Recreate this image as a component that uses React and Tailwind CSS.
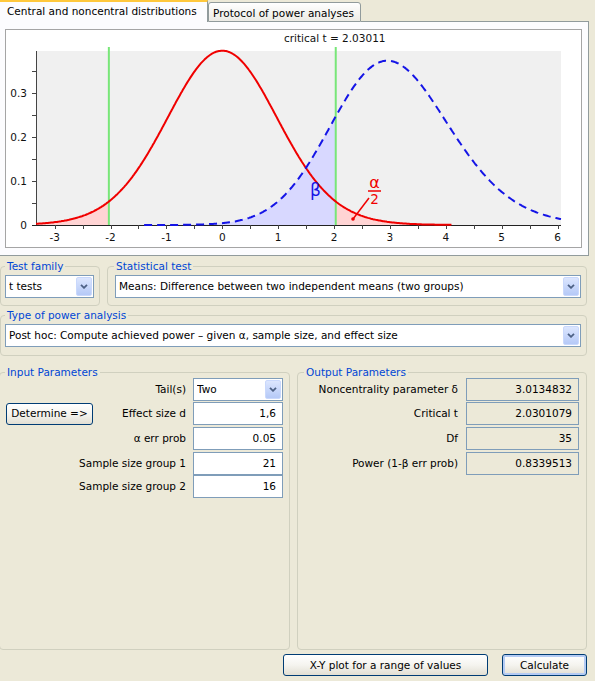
import React from 'react';

// t distribution, df = 35, delta = 3.0134832
const NU = 35;
const DELTA = 3.0134832;
const TC = 2.0301079;

function lgamma(x) {
  const c = [0.99999999999980993, 676.5203681218851, -1259.1392167224028, 771.32342877765313,
    -176.61502916214059, 12.507343278686905, -0.13857109526572012, 9.9843695780195716e-6, 1.5056327351493116e-7];
  x -= 1;
  let a = c[0];
  const t = x + 7.5;
  for (let i = 1; i < 9; i++) a += c[i] / (x + i);
  return 0.5 * Math.log(2 * Math.PI) + (x + 0.5) * Math.log(t) - t + Math.log(a);
}

const X = t => 222.3 + 55.88 * t;
const T = x => (x - 222.3) / 55.88;
const Y = p => 225 - 440 * p;

const LC_T = lgamma((NU + 1) / 2) - lgamma(NU / 2) - 0.5 * Math.log(NU * Math.PI);
const tpdf = t => Math.exp(LC_T - ((NU + 1) / 2) * Math.log(1 + (t * t) / NU));

const LC_CHI = -(NU / 2) * Math.log(2) - lgamma(NU / 2);
function nctpdf(t) {
  let s = 0;
  const n = 500, vmax = 110, dv = vmax / n;
  for (let i = 1; i <= n; i++) {
    const v = (i - 0.5) * dv;
    const r = Math.sqrt(v / NU);
    const z = t * r - DELTA;
    s += Math.exp(LC_CHI + (NU / 2 - 1) * Math.log(v) - v / 2 - (z * z) / 2) * r;
  }
  return (s * dv) / Math.sqrt(2 * Math.PI);
}

function curve(f, x0, x1) {
  const pts = [];
  for (let x = x0; x < x1; x += 1) pts.push([x, Y(f(T(x)))]);
  pts.push([x1, Y(f(T(x1)))]);
  return pts;
}
const line = pts => pts.map((p, i) => `${i ? 'L' : 'M'}${p[0].toFixed(1)} ${p[1].toFixed(1)}`).join('');
const area = pts => `${line(pts)}L${pts[pts.length - 1][0].toFixed(1)} 225L${pts[0][0].toFixed(1)} 225Z`;

const redLine = line(curve(tpdf, 36, X(4.1)));
const redLeft = area(curve(tpdf, 36, X(-TC)));
const redRight = area(curve(tpdf, X(TC), X(4.1)));
const blueFill = area(curve(nctpdf, 36, X(TC)));
const blueLine = line(curve(nctpdf, X(-1.4), 561));

const xTicks = [];
for (let t = -3; t <= 6; t += 0.5) xTicks.push(t);

function Chart() {
  return (
    <svg width="575" height="217" viewBox="6 30 575 217" className="block">
      <rect x="36" y="51" width="525" height="174" fill="#F0F0F0" />
      <path d={redLeft} fill="#FFD4D4" />
      <path d={redRight} fill="#FFD4D4" />
      <path d={blueFill} fill="#D8D8FF" />
      <line x1="36.5" y1="51" x2="36.5" y2="225" stroke="#444" />
      {[0, 1, 2, 3, 4, 5, 6, 7].map(k => (
        <line key={k} x1="32" y1={225.5 - 22 * k} x2="36" y2={225.5 - 22 * k} stroke="#444" />
      ))}
      <line x1="32" y1="225.5" x2="561" y2="225.5" stroke="#222" />
      {xTicks.map(t => (
        <line key={t} x1={Math.round(X(t)) + 0.5} y1="225" x2={Math.round(X(t)) + 0.5} y2="229" stroke="#444" />
      ))}
      <g fontFamily="DejaVu Sans, sans-serif" fontSize="10.5" fill="#111">
        {[-3, -2, -1, 0, 1, 2, 3, 4, 5, 6].map(t => (
          <text key={t} x={X(t)} y="241" textAnchor="middle">{t}</text>
        ))}
        {[['0', 0], ['0.1', 0.1], ['0.2', 0.2], ['0.3', 0.3]].map(([l, v]) => (
          <text key={l} x="27" y={Y(v) + 4} textAnchor="end">{l}</text>
        ))}
        <text x="284" y="42">critical t = 2.03011</text>
      </g>
      <line x1={X(-TC)} y1="47" x2={X(-TC)} y2="225" stroke="#78E678" strokeWidth="2" />
      <line x1={X(TC)} y1="47" x2={X(TC)} y2="225" stroke="#78E678" strokeWidth="2" />
      <path d={redLine} fill="none" stroke="#F00000" strokeWidth="2" />
      <path d={blueLine} fill="none" stroke="#1414E6" strokeWidth="2" strokeDasharray="8 5" />
      <text x="310" y="196" fontFamily="DejaVu Sans, sans-serif" fontSize="17" fill="#1414E6">β</text>
      <g fill="#F00000" fontFamily="DejaVu Sans, sans-serif" textAnchor="middle">
        <text x="374.5" y="188" fontSize="16">α</text>
        <text x="374.5" y="204" fontSize="13.5">2</text>
      </g>
      <line x1="368" y1="191" x2="381" y2="191" stroke="#F00000" strokeWidth="1.5" />
      <line x1="369" y1="198" x2="353" y2="219" stroke="#F00000" strokeWidth="1.5" />
      <circle cx="353" cy="219" r="1.8" fill="#F00000" />
    </svg>
  );
}

function Group({ title, titleClass, className, children }) {
  return (
    <div className={`relative border border-[#D0D0BF] rounded-[4px] ${className}`}>
      <span className={`absolute -top-[7px] bg-[#ECE9D8] px-[2px] leading-[13px] text-[#0046D5] ${titleClass}`}>{title}</span>
      {children}
    </div>
  );
}

function Combo({ text, className }) {
  return (
    <div className={`relative h-[23px] border border-[#7F9DB9] bg-white flex items-center pl-[3px] ${className}`}>
      <span className="truncate">{text}</span>
      <div className="absolute right-[1px] top-[1px] bottom-[1px] w-[16px] rounded-[2px] border border-[#C9D8FC] bg-gradient-to-b from-[#DCE6FE] to-[#B5C9F7] flex items-center justify-center">
        <svg width="8" height="5" viewBox="0 0 8 5">
          <path d="M1 0.8L4 3.8L7 0.8" fill="none" stroke="#4D6185" strokeWidth="1.8" />
        </svg>
      </div>
    </div>
  );
}

function Field({ value, className }) {
  return (
    <div className={`h-[23px] border border-[#7F9DB9] flex items-center justify-end pr-[6px] ${className}`}>{value}</div>
  );
}

function XPButton({ children, className }) {
  return (
    <button type="button" className={`h-[22px] flex items-center justify-center rounded-[3px] border border-[#003C74] bg-gradient-to-b from-white via-[#F5F4EF] to-[#E2DFD3] ${className}`}>
      {children}
    </button>
  );
}

const inputRows = [
  { label: 'Effect size d', value: '1,6', mt: 'mt-[1px]' },
  { label: 'α err prob', value: '0.05', mt: 'mt-[2px]' },
  { label: 'Sample size group 1', value: '21', mt: 'mt-[2px]' },
  { label: 'Sample size group 2', value: '16', mt: 'mt-0' },
];

const outputRows = [
  { label: 'Noncentrality parameter δ', value: '3.0134832', mt: 'mt-[5px]' },
  { label: 'Critical t', value: '2.0301079', mt: 'mt-[1px]' },
  { label: 'Df', value: '35', mt: 'mt-[2px]' },
  { label: 'Power (1-β err prob)', value: '0.8339513', mt: 'mt-[2px]' },
];

export default function App() {
  return (
    <div className="w-[595px] h-[681px] overflow-hidden bg-[#ECE9D8] font-['DejaVu_Sans',sans-serif] text-[10.5px] leading-[13px] text-black">
      {/* tabs */}
      <div className="flex items-end h-[22px] w-[589px]">
        <div className="h-[22px] w-[208px] border-t-2 border-r border-t-[#FFC83C] border-r-[#919B9C] bg-[#FCFCFE] pl-[7px] pt-[3px]">
          Central and noncentral distributions
        </div>
        <div className="h-[20px] w-[153px] rounded-t-[3px] border border-[#919B9C] bg-gradient-to-b from-white to-[#ECEBE5] pl-[4px] pt-[4px]">
          Protocol of power analyses
        </div>
        <div className="flex-1 h-px bg-[#919B9C]" />
      </div>
      <div className="w-[589px] h-[234px] border-r border-b border-[#919B9C] bg-[#FCFCFE] pl-[5px] pt-[7px]">
        <div className="w-[577px] h-[219px] border border-[#A5A5A5] bg-white">
          <Chart />
        </div>
      </div>

      {/* test selection */}
      <div className="flex mt-[10px]">
        <Group title="Test family" titleClass="left-[4px]" className="w-[100px] h-[40px] pt-[8px] pl-[4px]">
          <Combo text="t tests" className="w-[89px]" />
        </Group>
        <Group title="Statistical test" titleClass="left-[6px]" className="ml-[7px] w-[480px] h-[40px] pt-[8px] pl-[7px]">
          <Combo text="Means: Difference between two independent means (two groups)" className="w-[466px]" />
        </Group>
      </div>
      <Group title="Type of power analysis" titleClass="left-[4px]" className="mt-[9px] w-[587px] h-[41px] pt-[8px] pl-[4px]">
        <Combo text="Post hoc: Compute achieved power – given α, sample size, and effect size" className="w-[576px]" />
      </Group>

      {/* parameters */}
      <div className="flex mt-[16px]">
        <Group title="Input Parameters" titleClass="left-[5px]" className="-ml-px w-[291px] h-[278px] pt-[5px]">
          <div className="flex items-center justify-end h-[23px] pr-[6px]">
            <span>Tail(s)</span>
            <Combo text="Two" className="ml-[7px] w-[90px]" />
          </div>
          {inputRows.map((r, i) => (
            <div key={r.label} className={`flex items-center h-[23px] pr-[6px] ${r.mt}`}>
              {i === 0 && <XPButton className="ml-[6px] w-[87px]">Determine =&gt;</XPButton>}
              <span className="ml-auto">{r.label}</span>
              <Field value={r.value} className="ml-[7px] w-[90px] bg-white" />
            </div>
          ))}
        </Group>
        <Group title="Output Parameters" titleClass="left-[6px]" className="ml-[7px] w-[290px] h-[278px]">
          {outputRows.map(r => (
            <div key={r.label} className={`flex items-center justify-end h-[23px] pr-[7px] ${r.mt}`}>
              <span>{r.label}</span>
              <Field value={r.value} className="ml-[8px] w-[113px] bg-[#ECE9D8]" />
            </div>
          ))}
        </Group>
      </div>

      {/* actions */}
      <div className="flex mt-[4px]">
        <XPButton className="ml-[283px] w-[205px]">X-Y plot for a range of values</XPButton>
        <XPButton className="ml-[14px] w-[85px] shadow-[inset_0_0_0_2px_#B4CBF4]">Calculate</XPButton>
      </div>
    </div>
  );
}
